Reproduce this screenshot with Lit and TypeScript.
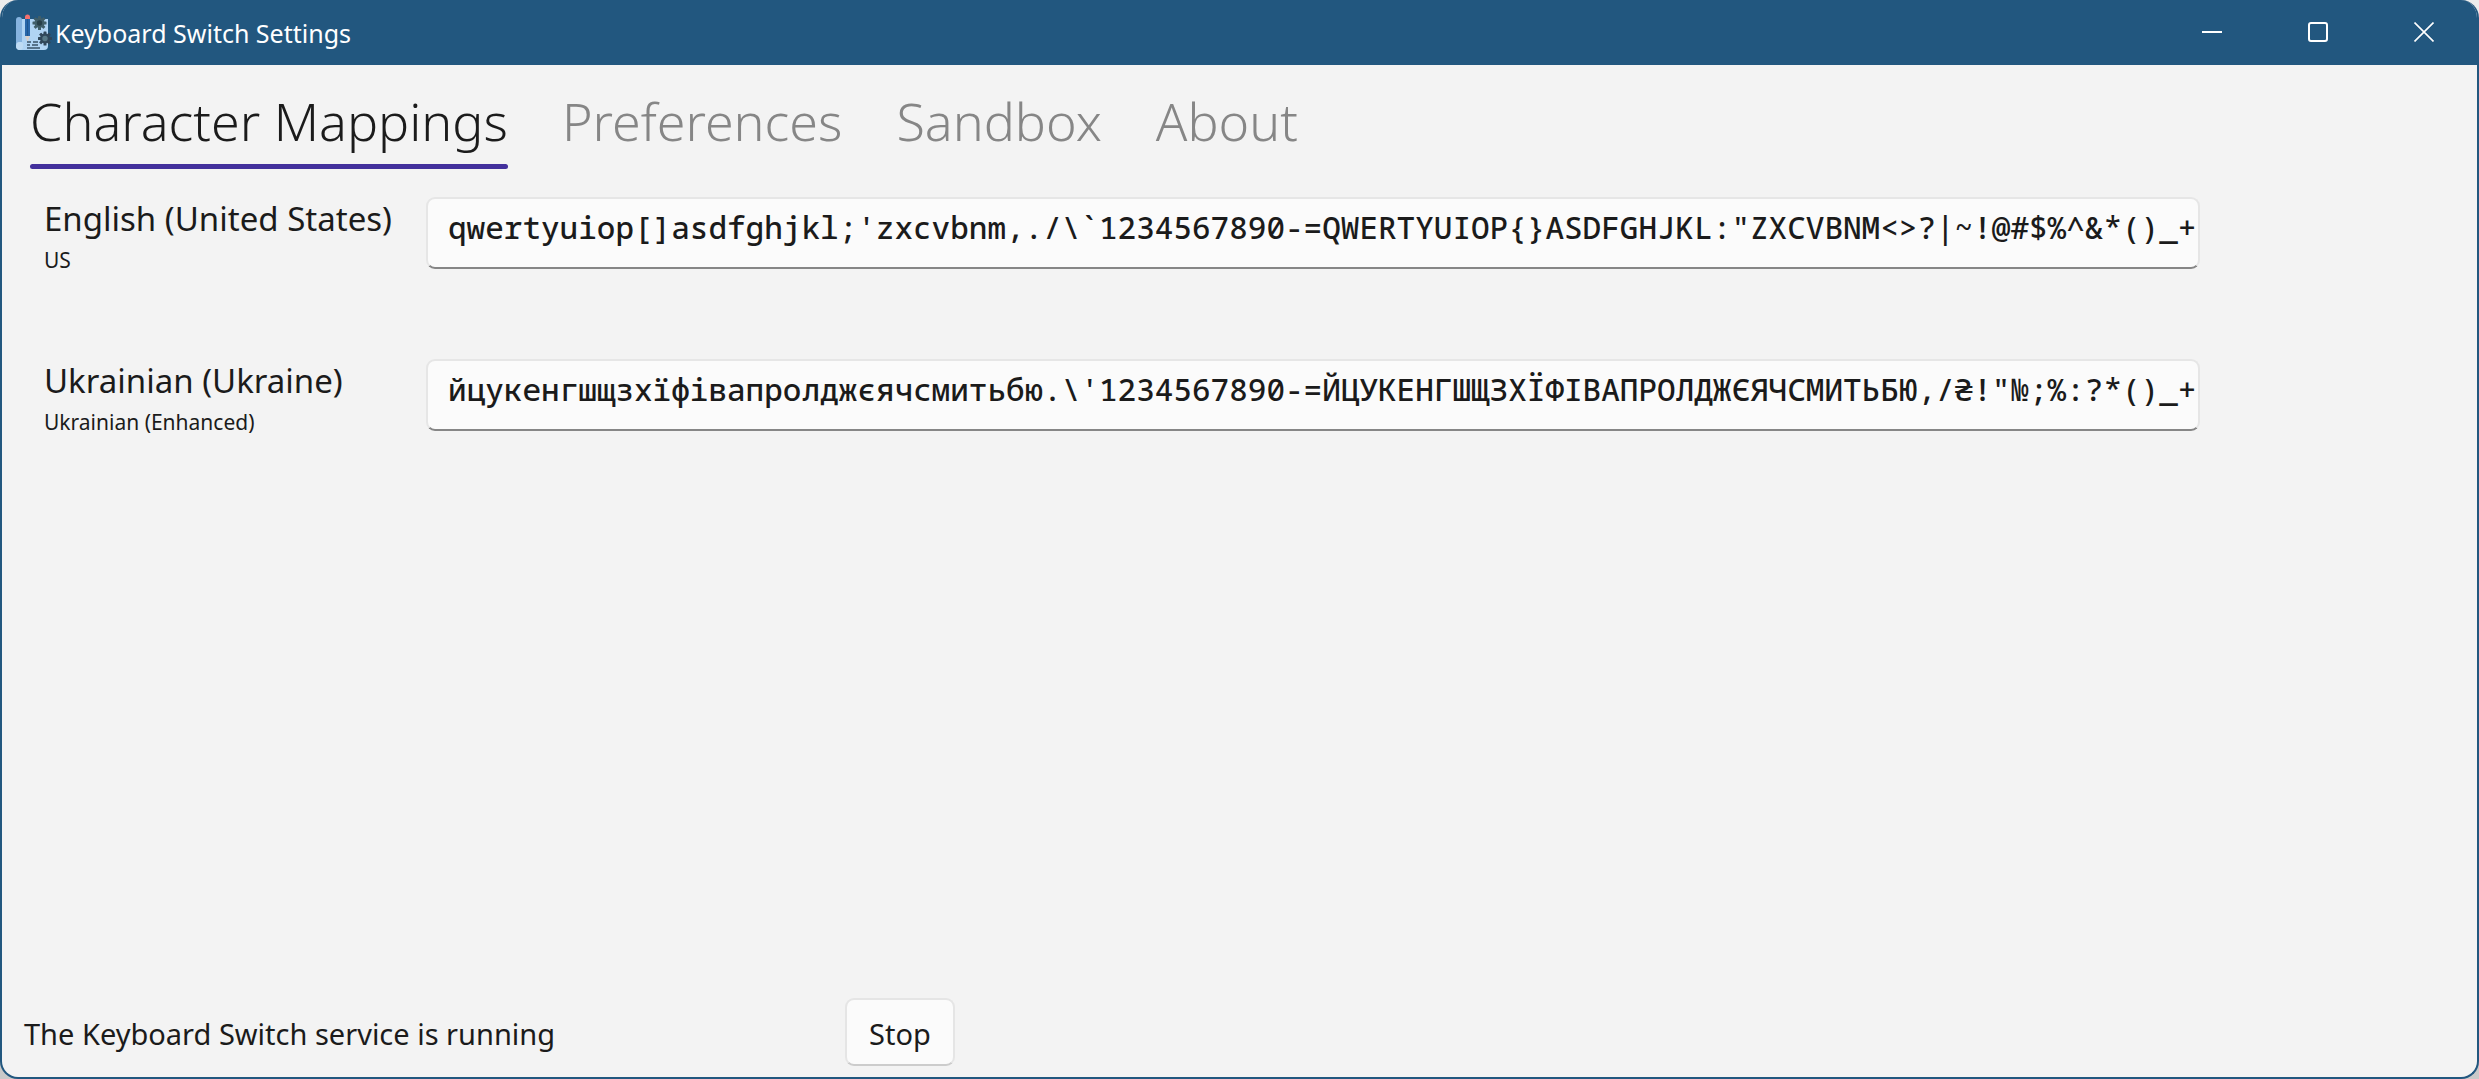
import { LitElement, html, css, svg } from "lit";
import { customElement, state } from "lit/decorators.js";
import { classMap } from "lit/directives/class-map.js";

interface Mapping {
  id: string;
  language: string;
  layout: string;
  characters: string;
}

const TABS = ["Character Mappings", "Preferences", "Sandbox", "About"];

const MAPPINGS: Mapping[] = [
  {
    id: "en-us",
    language: "English (United States)",
    layout: "US",
    characters:
      "qwertyuiop[]asdfghjkl;'zxcvbnm,./\\`1234567890-=QWERTYUIOP{}ASDFGHJKL:\"ZXCVBNM<>?|~!@#$%^&*()_+",
  },
  {
    id: "uk-ua",
    language: "Ukrainian (Ukraine)",
    layout: "Ukrainian (Enhanced)",
    characters:
      "йцукенгшщзхїфівапролджєячсмитьбю.\\'1234567890-=ЙЦУКЕНГШЩЗХЇФІВАПРОЛДЖЄЯЧСМИТЬБЮ,/₴!\"№;%:?*()_+",
  },
];

@customElement("title-bar")
export class TitleBar extends LitElement {
  static styles = css`
    :host {
      display: flex;
      align-items: stretch;
      height: 65px;
      background: #22577f;
      color: #fff;
    }
    .brand {
      display: flex;
      flex: 1;
      align-items: center;
      gap: 2px;
      padding-left: 15px;
    }
    .logo {
      width: 38px;
      height: 38px;
    }
    .title {
      margin: 0;
      font-size: 25px;
      font-weight: 400;
      line-height: 34px;
    }
    .controls {
      display: flex;
      padding-right: 2px;
    }
    .control {
      display: flex;
      align-items: center;
      justify-content: center;
      width: 106px;
      margin: 0;
      padding: 0 0 1px;
      border: 0;
      background: transparent;
      color: inherit;
    }
    .glyph {
      width: 20px;
      height: 20px;
      fill: none;
      stroke: currentColor;
      stroke-width: 2;
    }
    .thin {
      stroke-width: 1.6;
    }
  `;

  private gear(cx: number, cy: number, tone: string, hub: string) {
    const teeth = [0, 45, 90, 135];
    return svg`
      <g transform="translate(${cx} ${cy})">
        ${teeth.map(
          (angle) => svg`<rect x="-1.5" y="-7" width="3" height="14" rx="0.6" fill=${tone} transform="rotate(${angle})"></rect>`,
        )}
        <circle r="5" fill=${tone}></circle>
        <circle r="2.7" fill=${hub}></circle>
      </g>`;
  }

  render() {
    return html`
      <div class="brand">
        <svg class="logo" viewBox="0 0 38 38" aria-hidden="true">
          <path d="M1 6q0-3 3-3t3 3v24H1z" fill="#86b3df"></path>
          <path d="M7 5h26v27q0 4-4 4H5q-4 0-4-4t4-4h2z" fill="#b0d4f4"></path>
          <path d="M1 32q0-4 4-4t3 4q0 4-3 4-4 0-4-4z" fill="#bedbf4"></path>
          ${this.gear(24.5, 9, "#405e69", "#273f49")}
          ${this.gear(30, 24.5, "#30475a", "#587987")}
          <path d="M10 5h5v17h-5z" fill="#2866a9"></path>
          <path d="M12 5h1v17h-1z" fill="#1f568f"></path>
          <path d="M10 5V3q0-2.500 2.500-2.500T15 3v2z" fill="#f4706e"></path>
          <path d="M10 22h5l-2.500 6z" fill="#d9cfc9"></path>
          <path d="M12 28h4M18 28h5M12 31h3M17 31h6M12 34h13" fill="none" stroke="#3a5368" stroke-width="1.300"></path>
        </svg>
        <h1 class="title">Keyboard Switch Settings</h1>
      </div>
      <div class="controls">
        <button class="control" type="button" aria-label="Minimize">
          <svg class="glyph" viewBox="0 0 20 20"><path d="M0 10h20"></path></svg>
        </button>
        <button class="control" type="button" aria-label="Maximize">
          <svg class="glyph" viewBox="0 0 20 20"><rect x="1" y="1" width="18" height="18" rx="2"></rect></svg>
        </button>
        <button class="control" type="button" aria-label="Close">
          <svg class="glyph thin" viewBox="0 0 20 20"><path d="M.5.5l19 19M19.500.5l-19 19"></path></svg>
        </button>
      </div>
    `;
  }
}

@customElement("app-root")
export class AppRoot extends LitElement {
  static styles = css`
    :host {
      display: block;
      background: linear-gradient(#ececec, #c9c9c9);
      color: #1b1b1b;
      font-family: "Noto Sans", "Open Sans", sans-serif;
    }
    .window {
      display: flex;
      flex-direction: column;
      box-sizing: border-box;
      min-height: 100vh;
      overflow: hidden;
      border: 2px solid #22577f;
      border-top: 0;
      border-radius: 18px;
      background: #f3f3f3;
    }
    .bar {
      margin: 0 -2px;
    }
    .tabs {
      display: flex;
      gap: 54px;
      padding: 20px 28px 0;
    }
    .tab {
      display: flex;
      flex-direction: column;
      gap: 7px;
      margin: 0;
      padding: 0;
      border: 0;
      background: transparent;
      color: #868686;
      font-family: inherit;
      font-size: 52px;
      font-weight: 300;
      line-height: 72px;
      white-space: nowrap;
    }
    .tab::after {
      content: "";
      width: 100%;
      height: 5px;
      border-radius: 3px;
    }
    .selected {
      color: #1b1b1b;
    }
    .selected::after {
      background: #43309c;
    }
    .mappings {
      display: flex;
      flex: 1;
      flex-direction: column;
      gap: 74px;
      padding: 28px 277px 0 42px;
    }
    .mapping {
      display: grid;
      grid-template-columns: 354px 1fr;
      column-gap: 28px;
      align-items: start;
      height: 88px;
    }
    .name {
      display: flex;
      flex-direction: column;
    }
    .language {
      font-size: 33px;
      line-height: 44px;
      white-space: nowrap;
    }
    .layout {
      font-size: 21px;
      line-height: 38px;
    }
    .field {
      box-sizing: border-box;
      width: 100%;
      height: 72px;
      margin: 0;
      padding: 0 0 12px 20px;
      border: 2px solid #e6e6e6;
      border-bottom-color: #868686;
      border-radius: 9px;
      outline: 0;
      background: #fbfbfb;
      color: #1b1b1b;
      font-family: "Noto Sans Mono", "DejaVu Sans Mono", "Liberation Mono", monospace;
      font-size: 31px;
      font-weight: 500;
    }
    .service {
      display: grid;
      grid-template-columns: 821px auto 1fr;
      align-items: center;
      padding: 0 22px 11px;
    }
    .status {
      margin: 0;
      padding-top: 3px;
      font-size: 29px;
      line-height: 42px;
    }
    .stop {
      box-sizing: border-box;
      height: 68px;
      margin: 0;
      padding: 3px 22px 0;
      border: 2px solid #e5e5e5;
      border-bottom-color: #cccccc;
      border-radius: 9px;
      background: #fbfbfb;
      color: #1b1b1b;
      font-family: inherit;
      font-size: 29px;
      line-height: 42px;
    }
  `;

  @state() private active = TABS[0];

  render() {
    return html`
      <div class="window">
        <title-bar class="bar"></title-bar>
        <nav class="tabs" role="tablist">
          ${TABS.map(
            (tab) => html`<button
              type="button"
              role="tab"
              aria-selected=${tab === this.active ? "true" : "false"}
              class=${classMap({ tab: true, selected: tab === this.active })}
              @click=${() => (this.active = tab)}
            >${tab}</button>`,
          )}
        </nav>
        <main class="mappings">
          ${MAPPINGS.map(
            (mapping) => html`<div class="mapping">
              <label class="name" for=${mapping.id}>
                <span class="language">${mapping.language}</span>
                <span class="layout">${mapping.layout}</span>
              </label>
              <input class="field" id=${mapping.id} type="text" spellcheck="false" .value=${mapping.characters} />
            </div>`,
          )}
        </main>
        <footer class="service">
          <p class="status">The Keyboard Switch service is running</p>
          <button class="stop" type="button">Stop</button>
        </footer>
      </div>
    `;
  }
}
